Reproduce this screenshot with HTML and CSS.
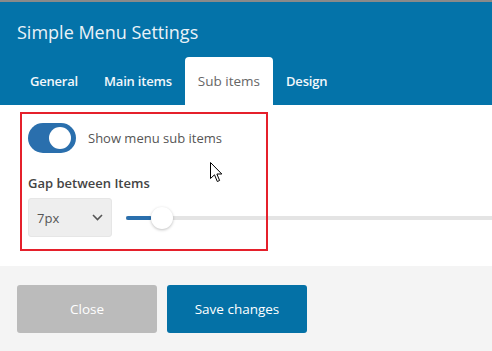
FILE: index.html
```html
<!DOCTYPE html>
<html lang="en">
<head>
  <meta charset="UTF-8" />
  <title>Simple Menu Settings</title>
  <link rel="stylesheet" href="styles.css">
</head>
<body>

  <div class="modal">
    <!-- header with tabs -->
    <div class="modal-header">
      <h1 class="modal-title">Simple Menu Settings</h1>
      <ul class="tabs">
        <li class="tab">General</li>
        <li class="tab">Main items</li>
        <li class="tab active">Sub items</li>
        <li class="tab">Design</li>
      </ul>
    </div>

    <div class="modal-body">
      <div class="toggle-row">
        <span class="toggle on"><span class="knob"></span></span>
        <span class="toggle-label">Show menu sub items</span>
      </div>

      <div class="field-label">Gap between Items</div>
      <div class="gap-row">
        <div class="select">
          <span>7px</span>
          <svg class="chevron" width="11" height="7" viewBox="0 0 11 7">
            <path d="M1 1 L5.5 5.5 L10 1" fill="none" stroke="#555" stroke-width="1.6"/>
          </svg>
        </div>
        <div class="slider">
          <div class="slider-fill"></div>
          <div class="slider-thumb"></div>
        </div>
      </div>

      <div class="highlight"></div>
      <svg class="cursor" width="14" height="22" viewBox="0 0 14 22">
        <path d="M0.5 0.5 L0.5 16.5 L4.5 12.8 L7.3 19.5 L9.6 18.5 L6.9 12 L11.8 12 Z" fill="#fff" stroke="#000" stroke-width="1"/>
      </svg>
    </div>

    <div class="modal-footer">
      <button class="btn btn-close">Close</button>
      <button class="btn btn-save">Save changes</button>
    </div>
  </div>

</body>
</html>
```

FILE: styles.css
```css
body {
  margin: 0;
  padding: 0;
  font-family: 'Open Sans', 'Noto Sans', sans-serif;
  background: #fff;
}

.modal {
  border-top: 2px solid #8a8a8a;
  height: 349px;
  display: flex;
  flex-direction: column;
  overflow: hidden;
}

.modal-header {
  background-color: #0473a9;
  padding: 16px 17px 0;
}

.modal-title {
  margin: 0;
  font-size: 18px;
  font-weight: 400;
  line-height: 28px;
  color: #eaf2f8;
}

.tabs {
  display: flex;
  list-style: none;
  margin: 11px 0 0;
  padding: 0;
}

.tab {
  padding: 0 13px;
  height: 48px;
  line-height: 48px;
  font-size: 13px;
  font-weight: 600;
  color: #f2f7fb;
  letter-spacing: -0.2px;
}

.tab.active {
  background: #fff;
  color: #666;
  font-weight: 400;
  font-size: 13.5px;
  letter-spacing: 0;
  border-radius: 4px 4px 0 0;
}

.modal-body {
  position: relative;
  flex: 1;
  padding: 18px 28px 0;
}

.toggle-row {
  display: flex;
  align-items: center;
  gap: 12px;
}

.toggle {
  width: 48px;
  height: 30px;
  border-radius: 15px;
  background: #2a6fad;
  position: relative;
}

.toggle .knob {
  position: absolute;
  top: 4px;
  right: 5px;
  width: 22px;
  height: 22px;
  border-radius: 50%;
  background: #fff;
}

.toggle-label {
  font-size: 13px;
  color: #555;
}

.field-label {
  margin-top: 22px;
  font-size: 13px;
  font-weight: 600;
  color: #444;
  line-height: 16px;
}

.gap-row {
  display: flex;
  align-items: center;
  margin-top: 7px;
  margin-right: -28px;
}

.select {
  width: 84px;
  height: 39px;
  box-sizing: border-box;
  background: #eeeeee;
  border: 1px solid #e6e6e6;
  border-radius: 3px;
  display: flex;
  align-items: center;
  justify-content: space-between;
  padding: 0 8px 0 8px;
  font-size: 13px;
  color: #555;
}

.slider {
  flex: 1;
  position: relative;
  height: 4px;
  margin-left: 14px;
  background: #e4e4e4;
}

.slider-fill {
  width: 26px;
  height: 4px;
  border-radius: 2px;
  background: #2a6fad;
}

.slider-thumb {
  position: absolute;
  left: 25px;
  top: -9px;
  width: 22px;
  height: 22px;
  border-radius: 50%;
  background: #fff;
  box-shadow: 0 1px 3px rgba(0, 0, 0, 0.25);
}

.highlight {
  position: absolute;
  left: 20px;
  top: 7px;
  width: 244px;
  height: 135px;
  border: 2px solid #e5202b;
}

.cursor {
  position: absolute;
  left: 210px;
  top: 57px;
}

.modal-footer {
  background: #f4f4f4;
  height: 85px;
  box-sizing: border-box;
  padding: 19px 17px;
  display: flex;
  gap: 10px;
}

.btn {
  width: 140px;
  height: 48px;
  border: none;
  border-radius: 3px;
  font-family: inherit;
  font-size: 13.5px;
  color: #fff;
}

.btn-close {
  background: #bbbbbb;
}

.btn-save {
  background: #0471a6;
}
```
